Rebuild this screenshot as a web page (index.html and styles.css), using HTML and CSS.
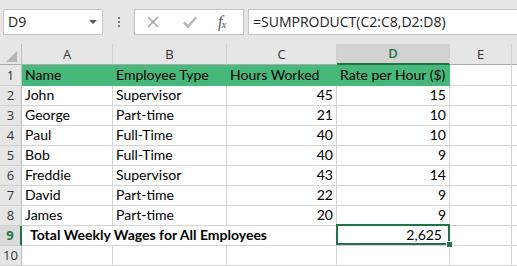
FILE: index.html
```html
<!DOCTYPE html>
<html>
<head>
<meta charset="utf-8">
<link rel="stylesheet" href="styles.css">
</head>
<body>
<div class="topbar">
  <div class="namebox"><span class="ref">D9</span><span class="caret"></span></div>
  <div class="dots"><i></i><i></i><i></i></div>
  <div class="btnbox">
    <svg class="ic" width="14" height="14" viewBox="0 0 14 14"><path d="M2 2 L12 12 M12 2 L2 12" stroke="#a6a6a6" stroke-width="1.6" fill="none"/></svg>
    <svg class="ic" width="16" height="14" viewBox="0 0 16 14"><path d="M2 7.5 L6 11.5 L14 2.5" stroke="#b9b9b9" stroke-width="2.6" fill="none"/></svg>
    <span class="fx">f<sub>x</sub></span>
  </div>
  <div class="formula">=SUMPRODUCT(C2:C8,D2:D8)</div>
</div>
<div class="sheet">
  <div class="ch corner"><span class="tri"></span></div>
  <div class="ch">A</div><div class="ch">B</div><div class="ch">C</div><div class="ch sel">D</div><div class="ch">E</div><div class="ch"></div>

  <div class="rh r1">1</div>
  <div class="c g r1">Name</div><div class="c g r1">Employee Type</div><div class="c g r1">Hours Worked</div><div class="c g r1">Rate per Hour ($)</div><div class="c r1"></div><div class="c r1"></div>

  <div class="rh">2</div>
  <div class="c">John</div><div class="c">Supervisor</div><div class="c n">45</div><div class="c n">15</div><div class="c"></div><div class="c"></div>

  <div class="rh">3</div>
  <div class="c">George</div><div class="c">Part-time</div><div class="c n">21</div><div class="c n">10</div><div class="c"></div><div class="c"></div>

  <div class="rh">4</div>
  <div class="c">Paul</div><div class="c">Full-Time</div><div class="c n">40</div><div class="c n">10</div><div class="c"></div><div class="c"></div>

  <div class="rh">5</div>
  <div class="c">Bob</div><div class="c">Full-Time</div><div class="c n">40</div><div class="c n">9</div><div class="c"></div><div class="c"></div>

  <div class="rh">6</div>
  <div class="c">Freddie</div><div class="c">Supervisor</div><div class="c n">43</div><div class="c n">14</div><div class="c"></div><div class="c"></div>

  <div class="rh">7</div>
  <div class="c">David</div><div class="c">Part-time</div><div class="c n">22</div><div class="c n">9</div><div class="c"></div><div class="c"></div>

  <div class="rh">8</div>
  <div class="c">James</div><div class="c">Part-time</div><div class="c n">20</div><div class="c n">9</div><div class="c"></div><div class="c"></div>

  <div class="rh selrow">9</div>
  <div class="c total">Total Weekly Wages for All Employees</div><div class="c n active">2,625<span class="handle"></span></div><div class="c"></div><div class="c"></div>

  <div class="rh">10</div>
  <div class="c"></div><div class="c"></div><div class="c"></div><div class="c"></div><div class="c"></div><div class="c"></div>
</div>
</body>
</html>
```
FILE: styles.css
```css
* { box-sizing: border-box; }
html, body { margin: 0; padding: 0; background: #fff; }
body { width: 517px; height: 266px; overflow: hidden; }

.topbar {
  height: 44px;
  background: #e6e6e6;
  display: flex;
  align-items: flex-start;
  padding: 9px 0 0 3px;
  font-family: "Open Sans", "Noto Sans", sans-serif;
}
.namebox {
  width: 100px;
  height: 26px;
  background: #fff;
  border: 1px solid #c6c6c6;
  display: flex;
  align-items: center;
  justify-content: space-between;
  padding: 0 5px 0 4px;
}
.ref { font-size: 14px; color: #222; line-height: 1; }
.caret {
  width: 0; height: 0;
  border-left: 4px solid transparent;
  border-right: 4px solid transparent;
  border-top: 4px solid #555;
}
.dots {
  width: 31px;
  height: 26px;
  display: flex;
  flex-direction: column;
  align-items: center;
  justify-content: center;
  gap: 2px;
}
.dots i { display: block; width: 2px; height: 2px; background: #7a7a7a; }
.btnbox {
  width: 110px;
  height: 26px;
  background: #fff;
  border: 1px solid #c6c6c6;
  display: flex;
  align-items: center;
  padding: 0 0 0 11px;
  gap: 22px;
}
.fx {
  font-family: "Liberation Serif", "DejaVu Serif", serif;
  font-style: italic;
  font-size: 16px;
  color: #555;
  line-height: 1;
  margin-left: -2px;
}
.fx sub { font-size: 11px; vertical-align: -1px; margin-left: -1px; }
.formula {
  flex: 1;
  margin-left: 4px;
  height: 26px;
  background: #fff;
  border: 1px solid #c6c6c6;
  border-right: none;
  font-size: 14px;
  color: #222;
  padding: 0 0 0 4px;
  line-height: 24px;
}

.sheet {
  display: grid;
  grid-template-columns: 22px 91px 114px 110px 113px 62px 1fr;
  grid-template-rows: 21px 21px repeat(9, 20px);
  font-family: Lato, "Open Sans", sans-serif;
  font-size: 14px;
  color: #000;
}
.ch {
  background: #e6e6e6;
  border-right: 1px solid #cfcfcf;
  border-bottom: 1px solid #ababab;
  font-family: "Open Sans", "Noto Sans", sans-serif;
  font-size: 13px;
  color: #333;
  display: flex;
  align-items: center;
  justify-content: center;
  line-height: 1;
}
.ch.corner { position: relative; border-right: 1px solid #bdbdbd; }
.tri {
  position: absolute;
  right: 4px;
  bottom: 2px;
  width: 0; height: 0;
  border-left: 11px solid transparent;
  border-bottom: 11px solid #b5b5b5;
}
.ch.sel {
  background: #d2d2d2;
  color: #217346;
  font-weight: 600;
  border-bottom: 2px solid #217346;
}
.rh {
  background: #e6e6e6;
  border-right: 1px solid #bdbdbd;
  border-bottom: 1px solid #d0d0d0;
  font-family: "Open Sans", "Noto Sans", sans-serif;
  font-size: 13px;
  color: #333;
  display: flex;
  align-items: center;
  justify-content: center;
  line-height: 1;
}
.rh.selrow {
  background: #dadada;
  color: #217346;
  font-weight: 700;
  border-right: 2px solid #217346;
}
.c {
  border-right: 1px solid #d4d4d4;
  border-bottom: 1px solid #d4d4d4;
  display: flex;
  align-items: flex-end;
  padding: 0 3px 1px 3px;
  line-height: 18px;
  white-space: nowrap;
}
.c.g { background: #46b87a; border-right-color: #46b87a; border-bottom-color: #46b87a; }
.c.n { justify-content: flex-end; }
.c.total {
  grid-column: span 3;
  font-weight: 700;
  padding-left: 8px;
}
.c.active { position: relative; padding-right: 7px; }
.c.active::before {
  content: "";
  position: absolute;
  top: -2px;
  left: -1px;
  right: -1px;
  bottom: 0;
  border: 2px solid #217346;
}
.handle {
  position: absolute;
  right: -4px;
  bottom: -3px;
  width: 7px;
  height: 7px;
  background: #217346;
  border: 1px solid #fff;
}
```
